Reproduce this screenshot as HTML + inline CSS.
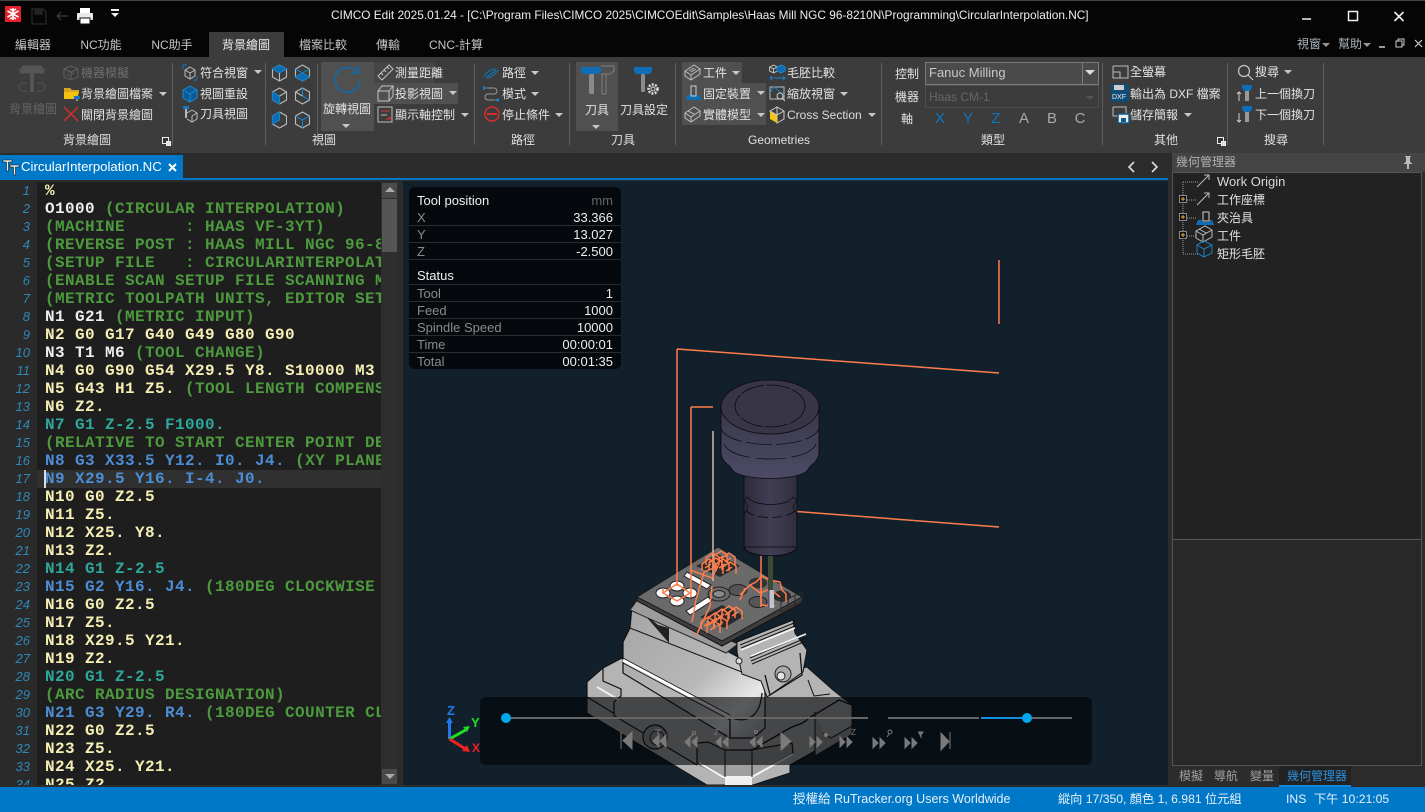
<!DOCTYPE html>
<html lang="zh-Hant"><head><meta charset="utf-8"><title>CIMCO Edit</title>
<style>
html,body{margin:0;padding:0;width:1425px;height:812px;overflow:hidden;background:#2c2c2c}
body{position:relative;font:12px/18px "Liberation Sans","Noto Sans CJK TC",sans-serif;color:#e2e2e2}
.b{position:absolute}
.t{position:absolute;white-space:nowrap;line-height:18px}
.c{transform:translateX(-50%)}
svg{position:absolute;overflow:visible}
.a{position:absolute;width:0;height:0;border-left:4px solid transparent;border-right:4px solid transparent;border-top:4px solid #c8c8c8}
.sep{position:absolute;width:1px;top:63px;height:82px;background:#5e5e5e}
.tab{position:absolute;top:36px;color:#c4c4c4;white-space:nowrap;line-height:18px;transform:translateX(-50%)}
.g{position:absolute;top:131px;color:#e0e0e0;white-space:nowrap;transform:translateX(-50%)}
#code{position:absolute;left:37px;top:182px;width:344px;height:603px;overflow:hidden;background:#1e1e1e}
#code div{position:absolute;left:8px;white-space:pre;font:bold 16px/18px "Liberation Mono",monospace;letter-spacing:.4px;color:#f6efb4}
#nums div{position:absolute;width:30px;text-align:right;font:italic 13px/18px "Liberation Sans",sans-serif;color:#2f88b8}
#code .v{color:#eee}#code .m{color:#4d9a3e}#code .e{color:#2da89c}#code .u{color:#4c8ed6}
.hr{position:absolute;left:0;right:0;height:1px;background:#2a2d30}
#info .t{line-height:17px;font-size:13px}
#info .k{color:#8a8a8a;left:8px}
#info .w{color:#eee;right:8px}
</style></head><body>

<!-- title bar -->
<div class="b" style="left:0;top:0;width:1425px;height:57px;background:#050505"></div>
<div class="b" style="left:0;top:0;width:1425px;height:1px;background:#444"></div>
<div class="b" style="left:5px;top:6px;width:16px;height:16px;background:#e2212c"></div>
<svg style="left:5px;top:6px" width="16" height="16" stroke="#fff" stroke-width="1.6"><path d="M8 2v12M2.500 5l11 6M13.500 5l-11 6M5 3l3 2 3-2M5 13l3-2 3 2"/></svg>
<svg style="left:30px;top:8px" width="18" height="17" fill="none" stroke="#232323" stroke-width="1.500"><path d="M2 1h11l3 3v12H2z"/><rect x="5" y="1" width="7" height="5" fill="#232323"/></svg>
<svg style="left:56px;top:10px" width="13" height="11" fill="none" stroke="#3e3e3e" stroke-width="1.200"><path d="M12 6H1M5 2L1 6l4 4"/></svg>
<svg style="left:76px;top:7px" width="18" height="18"><rect x="4" y="1" width="10" height="6" fill="#fff"/><rect x="1" y="6" width="16" height="7" rx="1" fill="#e8e8e8"/><rect x="4" y="11" width="10" height="6" fill="#fff" stroke="#111"/></svg>
<div class="b" style="left:111px;top:9px;width:8px;height:2px;background:#eee"></div><div class="a" style="left:111px;top:13px;border-top-color:#eee"></div>
<div class="t" style="left:331px;top:6px;color:#eee;font-size:11.85px">CIMCO Edit 2025.01.24 - [C:\Program Files\CIMCO 2025\CIMCOEdit\Samples\Haas Mill NGC 96-8210N\Programming\CircularInterpolation.NC]</div>
<svg style="left:1300px;top:8px" width="110" height="16" stroke="#eee" fill="none"><path d="M2 11h9" stroke-width="1.500"/><rect x="48.500" y="3.500" width="9" height="9" stroke-width="1.500"/><path d="M94.500 4l9 9M103.500 4l-9 9" stroke-width="1.600"/></svg>

<!-- tabs -->
<div class="b" style="left:209px;top:32px;width:75px;height:25px;background:#3c3c3c"></div>
<div class="tab" style="left:33px">編輯器</div>
<div class="tab" style="left:101px">NC功能</div>
<div class="tab" style="left:172px">NC助手</div>
<div class="tab" style="left:246px;color:#eee">背景繪圖</div>
<div class="tab" style="left:323px">檔案比較</div>
<div class="tab" style="left:388px">傳輸</div>
<div class="tab" style="left:456px">CNC-計算</div>
<div class="t" style="left:1297px;top:35px;color:#a8b4bc">視窗</div><div class="a" style="left:1322px;top:43px;border-top-color:#999"></div>
<div class="t" style="left:1338px;top:35px;color:#a8b4bc">幫助</div><div class="a" style="left:1363px;top:43px;border-top-color:#999"></div>
<svg style="left:1378px;top:38px" width="45" height="12" stroke="#ccc" fill="none"><path d="M1 9h6" stroke-width="1.500"/><path d="M18 3h6v6h-6zM20 3V1h6v6h-2"/><path d="M37 2l7 7M44 2l-7 7" stroke-width="1.200"/></svg>

<!-- ribbon -->
<div class="b" style="left:0;top:57px;width:1425px;height:96px;background:#3c3c3c"></div>
<div class="b" style="left:321px;top:62px;width:53px;height:69px;background:#505050"></div>
<div class="b" style="left:374px;top:62px;width:60px;height:21px;background:#454545"></div>
<div class="b" style="left:374px;top:83px;width:84px;height:21px;background:#505050"></div>
<div class="b" style="left:576px;top:62px;width:42px;height:69px;background:#505050"></div>
<div class="b" style="left:682px;top:62px;width:60px;height:21px;background:#505050"></div>
<div class="b" style="left:682px;top:83px;width:84px;height:42px;background:#505050"></div>
<div class="sep" style="left:172px"></div><div class="sep" style="left:265px"></div><div class="sep" style="left:317px"></div><div class="sep" style="left:474px"></div><div class="sep" style="left:569px"></div><div class="sep" style="left:675px"></div><div class="sep" style="left:881px"></div><div class="sep" style="left:1102px"></div><div class="sep" style="left:1227px"></div><div class="sep" style="left:1323px"></div>

<!-- group: background -->
<svg style="left:19px;top:65px" width="28" height="30" fill="none" stroke="#555"><rect x="3" y="1" width="20" height="3" rx="1" fill="#555"/><rect x="1" y="4" width="24" height="4" fill="#555"/><path d="M13 8v19" stroke-width="4"/><path d="M8 18H4a3 3 0 0 0 0 8h4M18 18h4a3 3 0 0 1 0 8h-4"/></svg>
<div class="t c" style="left:33px;top:100px;color:#666">背景繪圖</div>
<svg style="left:63px;top:65px" width="17" height="16" fill="none" stroke="#5e5e5e"><path d="M8 1l7 3v8l-7 3-7-3V4zM1 4l7 3 7-3M8 7v8M5 6l6 3M4 9l3 2"/></svg>
<div class="t" style="left:81px;top:64px;color:#6e6e6e">機器模擬</div>
<svg style="left:63px;top:86px" width="18" height="16"><path d="M1 2h6l2 2h7v2H1z" fill="#d9a520"/><path d="M1 6h15l-2 7H1z" fill="#f5c211"/><rect x="11" y="10" width="6" height="3" fill="#1876bd"/><rect x="13" y="13" width="2" height="2" fill="#888"/></svg>
<div class="t" style="left:81px;top:85px">背景繪圖檔案</div><div class="a" style="left:159px;top:92px"></div>
<svg style="left:63px;top:106px" width="16" height="16" stroke="#e02a2a" stroke-width="1.400"><path d="M1 1l14 14M15 1L1 15"/></svg>
<div class="t" style="left:81px;top:106px">關閉背景繪圖</div>
<div class="g" style="left:87px">背景繪圖</div>
<svg style="left:161px;top:136px" width="11" height="11" stroke="#eee" fill="#333"><rect x="1.500" y="1.500" width="6" height="6"/><rect x="5.500" y="5.500" width="4" height="4" fill="#ddd"/></svg>

<!-- group: view -->
<svg style="left:182px;top:64px" width="16" height="17" fill="none"><path d="M1 5V1h4M15 12v4h-4" stroke="#1276c0"/><path d="M8 3l5 3v6l-5 3-5-3V6zM3 6l5 3 5-3M8 9v6" stroke="#bbb"/></svg>
<div class="t" style="left:200px;top:64px">符合視窗</div><div class="a" style="left:254px;top:70px"></div>
<svg style="left:182px;top:85px" width="16" height="17" fill="#0a5a96" stroke="#1c88d4"><path d="M8 1l7 4v8l-7 4-7-4V5z"/><path d="M1 5l7 4 7-4M8 9v8" fill="none"/></svg>
<div class="t" style="left:200px;top:85px">視圖重設</div>
<svg style="left:182px;top:105px" width="16" height="17" fill="none" stroke="#bbb"><rect x="1" y="1" width="6" height="3" fill="#1876bd" stroke="none"/><path d="M4 4v9" stroke-width="2"/><path d="M10 5l5 3v6l-5 3-5-3M5 8l5-3M10 11l5-3M10 11v6"/></svg>
<div class="t" style="left:200px;top:105px">刀具視圖</div>
<div class="g" style="left:324px">視圖</div>

<svg style="left:272px;top:65px" width="40" height="64" fill="none" stroke-width="1.100">
<g transform="translate(0 0)"><path d="M7.500 0l7 4v8l-7 4-7-4V4z" stroke="#bbb"/><path d="M7.500 0l7 4-7 4-7-4z" fill="#0c6cb0" stroke="#1a80c4"/><path d="M7.500 8v8" stroke="#bbb"/></g>
<g transform="translate(23 0)"><path d="M7.500 0l7 4v8l-7 4-7-4V4z" stroke="#bbb"/><path d="M.5 12l7-4 7 4-7 4z" fill="#0c6cb0" stroke="#1a80c4"/><path d="M.5 4l7 4 7-4" stroke="#1a80c4"/></g>
<g transform="translate(0 23)"><path d="M7.500 0l7 4v8l-7 4-7-4V4z" stroke="#bbb"/><path d="M.5 4l7 4v8l-7-4z" fill="#0c6cb0" stroke="#1a80c4"/><path d="M7.500 8l7-4" stroke="#bbb"/></g>
<g transform="translate(23 23)"><path d="M7.500 0l7 4v8l-7 4-7-4V4z" stroke="#bbb"/><path d="M7.500 0v8l7 4" stroke="#1a80c4"/><path d="M7.500 8l-7-4" stroke="#bbb"/></g>
<g transform="translate(0 47)"><path d="M7.500 0l7 4v8l-7 4-7-4V4z" stroke="#bbb"/><path d="M.5 4l7-4v8l-7 4z" fill="#0c6cb0" stroke="#1a80c4"/></g>
<g transform="translate(23 47)"><path d="M7.500 0l7 4v8l-7 4-7-4V4z" stroke="#bbb"/><path d="M7.500 8v8M.5 4l7 4 7-4" stroke="#1a80c4"/></g>
</svg>

<svg style="left:333px;top:66px" width="30" height="28" fill="none" stroke="#0d6cae" stroke-width="1.500"><path d="M25 7A12.500 12.500 0 1 0 27 15"/><path d="M18 7h7.500V0"/></svg>
<div class="t c" style="left:347px;top:100px">旋轉視圖</div>
<div class="a" style="left:342px;top:124px"></div>
<svg style="left:377px;top:64px" width="17" height="17" fill="none" stroke="#c4c4c4"><path d="M1 12L12 1l4 4L5 16zM4 9l2 2M7 6l2 2M10 3l2 2"/></svg>
<div class="t" style="left:395px;top:64px">測量距離</div>
<svg style="left:377px;top:85px" width="17" height="17" fill="none" stroke="#c4c4c4"><path d="M1 6h11v10H1zM1 6l4-5h11l-4 5M12 16l4-5V1"/></svg>
<div class="t" style="left:395px;top:85px">投影視圖</div><div class="a" style="left:449px;top:91px"></div>
<svg style="left:377px;top:106px" width="17" height="17" fill="none"><path d="M1 1h14v15H1z" stroke="#bbb"/><path d="M4 5h9" stroke="#c33"/><path d="M4 9h6" stroke="#bbb"/><path d="M9 14l4-3M13 11v3" stroke="#d33"/></svg>
<div class="t" style="left:395px;top:106px">顯示軸控制</div><div class="a" style="left:461px;top:113px"></div>

<!-- group: path -->
<svg style="left:483px;top:66px" width="16" height="13" fill="none" stroke="#1276b8" stroke-width="1.100"><path d="M1 11c0-3 8-8 10-8s2 2 0 3-6 4-7 5 2 1 4 0 7-6 7-7"/></svg>
<div class="t" style="left:502px;top:64px">路徑</div><div class="a" style="left:531px;top:71px"></div>
<svg style="left:483px;top:85px" width="16" height="16" fill="none" stroke="#999"><path d="M3 3h8a3 3 0 0 1 0 6H5a3 3 0 0 0 0 6h10"/><path d="M0 1l5 2-5 2z" fill="#1a80c4" stroke="none"/><path d="M16 13l-5 2 5 2z" fill="#1a80c4" stroke="none"/></svg>
<div class="t" style="left:502px;top:85px">模式</div><div class="a" style="left:531px;top:92px"></div>
<svg style="left:484px;top:106px" width="16" height="16"><circle cx="8" cy="8" r="7" fill="none" stroke="#d92d2d" stroke-width="1.500"/><rect x="3" y="7" width="10" height="2" fill="#e02a2a"/></svg>
<div class="t" style="left:502px;top:106px">停止條件</div><div class="a" style="left:555px;top:113px"></div>
<div class="g" style="left:523px">路徑</div>

<!-- group: tool -->
<svg style="left:581px;top:65px" width="34" height="30"><path d="M0 2h20l0 4-2 3H2L0 6z" fill="#0e6fb8"/><rect x="8" y="9" width="5" height="20" rx="1" fill="#8a8a8a"/><path d="M20 1h13v5l-4 3h-9" fill="none" stroke="#808080"/><path d="M21 9v20h4V9" fill="none" stroke="#808080"/></svg>
<div class="t c" style="left:597px;top:101px">刀具</div>
<div class="a" style="left:592px;top:125px"></div>
<svg style="left:633px;top:65px" width="28" height="32"><path d="M1 2h18v4l-2 3H3L1 6z" fill="#0e6fb8"/><rect x="8" y="9" width="4" height="18" rx="1" fill="#8a8a8a"/><circle cx="20" cy="24" r="4.500" fill="none" stroke="#ddd" stroke-width="2.500" stroke-dasharray="2 1.300"/><circle cx="20" cy="24" r="2" fill="none" stroke="#ddd"/></svg>
<div class="t c" style="left:644px;top:101px">刀具設定</div>
<div class="g" style="left:623px">刀具</div>

<!-- geometries -->
<svg style="left:684px;top:64px" width="17" height="17" fill="none" stroke="#bbb"><path d="M1 7l9-6 6 4v5l-9 6-6-4zM1 7l6 4 9-6M7 11v5M5 7l5-3M7 8l5-3"/></svg>
<div class="t" style="left:703px;top:64px">工件</div><div class="a" style="left:732px;top:71px"></div>
<svg style="left:685px;top:85px" width="17" height="16"><path d="M2 10h13l1 5H1z" fill="#0e6fb8"/><rect x="6" y="1" width="5" height="10" fill="none" stroke="#ccc"/></svg>
<div class="t" style="left:703px;top:85px">固定裝置</div><div class="a" style="left:757px;top:91px"></div>
<svg style="left:684px;top:106px" width="17" height="17" fill="none" stroke="#bbb"><path d="M1 7l9-6 6 4v5l-9 6-6-4zM1 7l6 4 9-6M7 11v5M4 5l6 3"/></svg>
<div class="t" style="left:703px;top:106px">實體模型</div><div class="a" style="left:757px;top:113px"></div>
<svg style="left:769px;top:64px" width="17" height="17" fill="none"><path d="M4 1l4 2v4L4 9 0 7V3zM0 3l4 2 4-2M4 5v4" stroke="#bbb" transform="translate(.5 0)"/><path d="M12 1l4 2v4l-4 2-4-2V3z" fill="#0c6cb0" stroke="#1a88d0"/><path d="M1 14h15M1 14l2-2M1 14l2 2M16 14l-2-2M16 14l-2 2" stroke="#1a80c4"/></svg>
<div class="t" style="left:787px;top:64px">毛胚比較</div>
<svg style="left:769px;top:85px" width="17" height="17" fill="none"><path d="M1 2h14v12H1z" stroke="#bbb"/><path d="M1 8l4-6 10 8" stroke="#1a80c4"/><circle cx="11" cy="11" r="3" stroke="#ccc"/><path d="M13 13l3 3" stroke="#ccc"/></svg>
<div class="t" style="left:787px;top:85px">縮放視窗</div><div class="a" style="left:840px;top:92px"></div>
<svg style="left:769px;top:106px" width="17" height="17"><path d="M8 1l7 4v8l-7 4z" fill="none" stroke="#ccc"/><path d="M1 5l7 4v8l-7-4z" fill="#f4c31c"/><path d="M8 1L1 5l7 4 7-4" fill="none" stroke="#ccc"/></svg>
<div class="t" style="left:787px;top:106px;font-size:12px;color:#ddd">Cross Section</div><div class="a" style="left:868px;top:113px"></div>
<div class="g" style="left:779px;font-size:12px">Geometries</div>

<!-- type -->
<div class="t" style="left:895px;top:65px">控制</div>
<div class="t" style="left:895px;top:88px">機器</div>
<div class="t" style="left:901px;top:110px">軸</div>
<div class="b" style="left:925px;top:62px;width:172px;height:21px;background:#4a4a4a;border:1px solid #7a7a7a"></div>
<div class="t" style="left:929px;top:64px;font-size:13px;color:#c8c8c8">Fanuc Milling</div>
<div class="b" style="left:1082px;top:62px;width:1px;height:22px;background:#7a7a7a"></div><div class="b" style="left:1085px;top:70px;width:0;height:0;border-left:5px solid transparent;border-right:5px solid transparent;border-top:5px solid #ddd"></div>
<div class="b" style="left:925px;top:85px;width:172px;height:21px;border:1px solid #4e4e4e"></div>
<div class="t" style="left:929px;top:88px;color:#666">Haas CM-1</div><div class="a" style="left:1086px;top:96px;border-top-color:#555"></div>
<div class="t c" style="left:940px;top:110px;font-size:15px;color:#0f76be">X</div><div class="t c" style="left:968px;top:110px;font-size:15px;color:#0f76be">Y</div><div class="t c" style="left:996px;top:110px;font-size:15px;color:#0f76be">Z</div><div class="t c" style="left:1024px;top:110px;font-size:15px;color:#a8a8a8">A</div><div class="t c" style="left:1052px;top:110px;font-size:15px;color:#a8a8a8">B</div><div class="t c" style="left:1080px;top:110px;font-size:15px;color:#a8a8a8">C</div>
<div class="g" style="left:993px">類型</div>

<!-- other -->
<svg style="left:1112px;top:65px" width="17" height="14" fill="none" stroke="#bbb"><path d="M1 1h15v12H8M1 1v6M1 7h7v6H1z"/></svg>
<div class="t" style="left:1130px;top:63px">全螢幕</div>
<svg style="left:1111px;top:84px" width="18" height="18"><rect x="0" y="0" width="18" height="18" rx="2" fill="#0f4d78"/><rect x="3" y="1" width="10" height="5" fill="#ccc"/><text x="1" y="15" font-family="Liberation Sans" font-size="7" fill="#eee">DXF</text></svg>
<div class="t" style="left:1130px;top:85px">輸出為 DXF 檔案</div>
<svg style="left:1112px;top:106px" width="18" height="18" fill="none"><path d="M1 1h13v9H7" stroke="#bbb"/><path d="M1 1v9h5" stroke="#bbb"/><rect x="6" y="8" width="11" height="9" rx="1" fill="#eee" stroke="#0f5a8e" stroke-width="1.500"/><rect x="9" y="12" width="5" height="4" fill="#0f5a8e"/></svg>
<div class="t" style="left:1130px;top:106px">儲存簡報</div><div class="a" style="left:1184px;top:113px"></div>
<div class="g" style="left:1166px">其他</div>
<svg style="left:1216px;top:136px" width="11" height="11" stroke="#eee" fill="#333"><rect x="1.500" y="1.500" width="6" height="6"/><rect x="5.500" y="5.500" width="4" height="4" fill="#ddd"/></svg>

<!-- search -->
<svg style="left:1237px;top:64px" width="17" height="17" fill="none" stroke="#c8c8c8" stroke-width="1.200"><circle cx="7" cy="7" r="5.500"/><path d="M11 11l5 5"/></svg>
<div class="t" style="left:1255px;top:63px">搜尋</div><div class="a" style="left:1284px;top:70px"></div>
<svg style="left:1236px;top:85px" width="18" height="17"><path d="M6 0h10v3l-2 3H8L6 3z" fill="#0e6fb8"/><rect x="9" y="6" width="4" height="10" fill="#999"/><path d="M3 16V7M1 9l2-2 2 2" fill="none" stroke="#ccc"/></svg>
<div class="t" style="left:1255px;top:85px">上一個換刀</div>
<svg style="left:1236px;top:106px" width="18" height="17"><path d="M6 0h10v3l-2 3H8L6 3z" fill="#0e6fb8"/><rect x="9" y="6" width="4" height="10" fill="#999"/><path d="M3 7v9M1 14l2 2 2-2" fill="none" stroke="#ccc"/></svg>
<div class="t" style="left:1255px;top:106px">下一個換刀</div>
<div class="g" style="left:1276px">搜尋</div>

<!-- doc tab strip -->
<div class="b" style="left:0;top:155px;width:183px;height:23px;background:#0078c8"></div>
<div class="b" style="left:0;top:178px;width:1168px;height:2px;background:#0078c8"></div>
<svg style="left:3px;top:159px" width="18" height="17" fill="#eee" stroke="#111" stroke-width=".6"><path d="M0 1h9v2H5.500v9h-2V3H0z"/><path d="M7 6h9v2h-3.500v8h-2V8H7z"/></svg>
<div class="t" style="left:21px;top:158px;color:#fff;font-size:13.2px">CircularInterpolation.NC</div>
<svg style="left:168px;top:163px" width="9" height="9" stroke="#fff" stroke-width="2"><path d="M1 1l7 7M8 1L1 8"/></svg>
<svg style="left:1128px;top:160px" width="34" height="14" fill="none" stroke="#ddd" stroke-width="1.600"><path d="M6 2L1 7l5 5M24 2l5 5-5 5"/></svg>

<!-- editor -->
<div class="b" style="left:0;top:181px;width:37px;height:604px;background:#2a2a2a"></div>
<div id="code">
<div style="top:0">%</div>
<div style="top:18px"><span class="v">O1000</span> <span class="m">(CIRCULAR INTERPOLATION)</span></div>
<div style="top:36px" class="m">(MACHINE      : HAAS VF-3YT)</div>
<div style="top:54px" class="m">(REVERSE POST : HAAS MILL NGC 96-8210N)</div>
<div style="top:72px" class="m">(SETUP FILE   : CIRCULARINTERPOLATION)</div>
<div style="top:90px" class="m">(ENABLE SCAN SETUP FILE SCANNING MODE)</div>
<div style="top:108px" class="m">(METRIC TOOLPATH UNITS, EDITOR SETTINGS)</div>
<div style="top:126px"><span class="v">N1 G21</span> <span class="m">(METRIC INPUT)</span></div>
<div style="top:144px">N2 G0 G17 G40 G49 G80 G90</div>
<div style="top:162px"><span class="v">N3 T1 M6</span> <span class="m">(TOOL CHANGE)</span></div>
<div style="top:180px">N4 G0 G90 G54 X29.5 Y8. S10000 M3</div>
<div style="top:198px">N5 G43 H1 Z5. <span class="m">(TOOL LENGTH COMPENSATION)</span></div>
<div style="top:216px">N6 Z2.</div>
<div style="top:234px" class="e">N7 G1 Z-2.5 F1000.</div>
<div style="top:252px" class="m">(RELATIVE TO START CENTER POINT DEFINITION)</div>
<div style="top:270px"><span class="u">N8 G3 X33.5 Y12. I0. J4.</span> <span class="m">(XY PLANE ARC)</span></div>
<div class="b" style="left:0;top:288px;width:344px;height:18px;background:#303030"></div>
<div class="b" style="left:7px;top:288px;width:2px;height:18px;background:#ddd;z-index:2"></div>
<div style="top:288px" class="u">N9 X29.5 Y16. I-4. J0.</div>
<div style="top:306px">N10 G0 Z2.5</div>
<div style="top:324px">N11 Z5.</div>
<div style="top:342px">N12 X25. Y8.</div>
<div style="top:360px">N13 Z2.</div>
<div style="top:378px" class="e">N14 G1 Z-2.5</div>
<div style="top:396px"><span class="u">N15 G2 Y16. J4.</span> <span class="m">(180DEG CLOCKWISE ARC)</span></div>
<div style="top:414px">N16 G0 Z2.5</div>
<div style="top:432px">N17 Z5.</div>
<div style="top:450px">N18 X29.5 Y21.</div>
<div style="top:468px">N19 Z2.</div>
<div style="top:486px" class="e">N20 G1 Z-2.5</div>
<div style="top:504px" class="m">(ARC RADIUS DESIGNATION)</div>
<div style="top:522px"><span class="u">N21 G3 Y29. R4.</span> <span class="m">(180DEG COUNTER CLOCKWISE)</span></div>
<div style="top:540px">N22 G0 Z2.5</div>
<div style="top:558px">N23 Z5.</div>
<div style="top:576px">N24 X25. Y21.</div>
<div style="top:594px">N25 Z2.</div>
</div>
<div id="nums" class="b" style="left:0;top:182px;width:37px;height:603px;overflow:hidden">
<div style="top:0">1</div><div style="top:18px">2</div><div style="top:36px">3</div><div style="top:54px">4</div><div style="top:72px">5</div><div style="top:90px">6</div><div style="top:108px">7</div><div style="top:126px">8</div><div style="top:144px">9</div><div style="top:162px">10</div><div style="top:180px">11</div><div style="top:198px">12</div><div style="top:216px">13</div><div style="top:234px">14</div><div style="top:252px">15</div><div style="top:270px">16</div><div style="top:288px">17</div><div style="top:306px">18</div><div style="top:324px">19</div><div style="top:342px">20</div><div style="top:360px">21</div><div style="top:378px">22</div><div style="top:396px">23</div><div style="top:414px">24</div><div style="top:432px">25</div><div style="top:450px">26</div><div style="top:468px">27</div><div style="top:486px">28</div><div style="top:504px">29</div><div style="top:522px">30</div><div style="top:540px">31</div><div style="top:558px">32</div><div style="top:576px">33</div><div style="top:594px">34</div>
</div>
<div class="b" style="left:381px;top:181px;width:17px;height:604px;background:#2e2e2e"></div>
<div class="b" style="left:382px;top:183px;width:15px;height:15px;background:#4a4a4a"></div>
<div class="b" style="left:385px;top:187px;width:0;height:0;border-left:5px solid transparent;border-right:5px solid transparent;border-bottom:5px solid #aaa"></div>
<div class="b" style="left:382px;top:199px;width:15px;height:53px;background:#555"></div>
<div class="b" style="left:382px;top:769px;width:15px;height:15px;background:#4a4a4a"></div>
<div class="b" style="left:385px;top:774px;width:0;height:0;border-left:5px solid transparent;border-right:5px solid transparent;border-top:5px solid #aaa"></div>

<!-- viewport -->
<div class="b" style="left:403px;top:181px;width:765px;height:604px;background:#12202b;overflow:hidden">
<svg style="left:0;top:0" width="765" height="604" viewBox="403 181 765 604">
<defs>
<linearGradient id="bd" x1="0" y1="0" x2="1" y2="1"><stop offset="0" stop-color="#a4a4a4"/><stop offset=".55" stop-color="#b8b8b8"/><stop offset=".8" stop-color="#e8e8e8"/><stop offset="1" stop-color="#a8a8a8"/></linearGradient>
<linearGradient id="ho" x1="0" y1="0" x2="0" y2="1"><stop offset="0" stop-color="#3a384a"/><stop offset="1" stop-color="#4c4a66"/></linearGradient>
<linearGradient id="ne" x1="0" y1="0" x2="1" y2="0"><stop offset="0" stop-color="#2e2c38"/><stop offset=".5" stop-color="#403e54"/><stop offset="1" stop-color="#302e3c"/></linearGradient>
<path id="n" d="M0 12V5l7-5 6 4v8M3 9l6-4" fill="none"/>
</defs>
<!-- base -->
<path d="M587 682L603 668L622 658L682 698L807 667L833 690L852 705V730L790 765V773L753 785H707L587 713Z" fill="#b4b4b4" stroke="#111"/>
<path d="M603 668v13l18 8v7l-7 6v12M587 697l28 17M587 682v15" fill="none" stroke="#111" stroke-width="1.200"/>
<path d="M597 687l22 13" stroke="#eee" stroke-width="2" fill="none"/>
<path d="M613 715l84 50" stroke="#111" fill="none" stroke-width="1.200"/>
<path d="M697 743v20l26 14h29l41-24-1-10-42 7h-25l-17-8z" fill="#a0a0a0" stroke="#111" stroke-width="1.200"/>
<path d="M699 763l24 14h29l41-23" stroke="#f4f4f4" stroke-width="2" fill="none"/>
<path d="M725 777h27v8h-27z" fill="#f0f0f0"/>
<path d="M725 750v27M752 750v27" stroke="#111"/>
<path d="M752 750l38-22c8-4 12-3 19-10l30-18 13 5" fill="none" stroke="#111" stroke-width="1.400"/>
<circle cx="655" cy="737" r="12" fill="#a0a0a0" stroke="#111" stroke-width="1.200"/><circle cx="657" cy="738" r="7" fill="none" stroke="#222"/>
<path d="M815 712v44l37-22v-8l-21 12-8-5" fill="#a0a0a0" stroke="#111"/>
<path d="M808 680l6 16 16-2" fill="none" stroke="#111"/>
<!-- upper body -->
<path d="M632 605l-2 23-7 14v31l107 65h23l12-10 0-48-3-10-92-50z" fill="url(#bd)" stroke="#111" stroke-width="1.200"/>
<path d="M630 628l127 50" fill="none" stroke="#111"/>
<path d="M623 660l107 57" fill="none" stroke="#fff" stroke-width="3"/>
<path d="M623 658l107 57M623 663l107 57" fill="none" stroke="#111" stroke-width=".8"/>
<path d="M730 717v21M730 717c12 6 30 4 32-24" fill="none" stroke="#222" stroke-width="1.400"/>
<path d="M642 612l16 13 11 3v15z" fill="#222"/>
<path d="M630 610l96 43 12-9-100-45z" fill="#9c9c9c" stroke="#222"/>
<!-- clamp right -->
<path d="M737 642l56-22 2 13 12 17-4 22-36 25-6-16-19-7-5-22z" fill="#b4b4b4" stroke="#111"/>
<path d="M740 645l54-22M741 648l54-22M750 658l56-24M751 661l55-23M752 664l54-23" stroke="#111" fill="none"/>
<path d="M741 650l54-22M751 656l55-22" stroke="#f6f6f6" stroke-width="1.600" fill="none"/>
<path d="M765 675l5 20 32-20-2-22" fill="none" stroke="#111" stroke-width="1.300"/>
<circle cx="783" cy="674" r="8" fill="#aaa" stroke="#222"/><circle cx="781" cy="676" r="4" fill="#e4e4e4" stroke="#222"/>
<circle cx="739" cy="661" r="3" fill="#ddd" stroke="#222"/>
<!-- plate -->
<path d="M637 597v4l85 45 80-43v-6z" fill="#3e3e3e" stroke="#111"/>
<path d="M637 597l81-50 84 50-80 44z" fill="#6a6a6a" stroke="#1a1a1a"/>
<!-- plate holes -->
<g fill="#fff" stroke="#222"><ellipse cx="677" cy="586" rx="7" ry="5"/><ellipse cx="663" cy="593" rx="7" ry="5"/><ellipse cx="690" cy="593" rx="7" ry="5"/><ellipse cx="677" cy="601" rx="7" ry="5"/><path d="M684 576l3-4 24 13-4 4zM686 611l4 4 22-14-4-4z"/></g>
<ellipse cx="719" cy="594" rx="11" ry="7" fill="#6a6a6a" stroke="#222"/><ellipse cx="719" cy="594" rx="6" ry="3.500" fill="#8a8a8a" stroke="#222"/>
<g fill="#2a2a2a"><path d="M696 566l22-12 22 12-20 11zM700 617l22-12 22 11-20 12z"/></g>
<ellipse cx="738" cy="590" rx="9" ry="5.500" fill="#555" stroke="#222"/><ellipse cx="758" cy="583" rx="9" ry="5.500" fill="#333"/><ellipse cx="782" cy="596" rx="9" ry="5.500" fill="#2a2a2a"/><ellipse cx="758" cy="602" rx="9" ry="5.500" fill="#555" stroke="#222"/>
<g fill="none" stroke="#2a2a2a"><path d="M781 612v-10l21-10v9zM788 599v10M795 596v10"/></g>
<!-- toolpath -->
<g fill="none" stroke="#ff7d4d" stroke-width="1.500">
<path d="M999 260v64M677 349l322 24M677 349v237M691 407h22M691 407v190"/>
<path d="M790 511l209 16"/>
<path d="M713 431v150" stroke="#d9b8a6"/>
<path d="M761 555v52"/>
<path d="M663 593l14-9 13 9-13 8zM663 593v-4M690 570l22 8 6-12-14 6 -8 28-4 22M712 586l-2 20-14 30"/>
<use href="#n" x="702" y="559"/><use href="#n" x="709" y="558"/><use href="#n" x="716" y="559"/><use href="#n" x="723" y="562"/><use href="#n" x="706" y="553"/><use href="#n" x="714" y="551"/><use href="#n" x="722" y="553"/>
<use href="#n" x="701" y="617"/><use href="#n" x="708" y="613"/><use href="#n" x="715" y="609"/><use href="#n" x="722" y="606"/><use href="#n" x="729" y="607"/><use href="#n" x="707" y="621"/><use href="#n" x="714" y="617"/>
<path d="M740 595l10-10 6-3 6-6 8 4 10 2 2 8 4 4v8M750 585l10 8 10-4 10 8M761 580v25l14 1M745 588l-5 12"/>
</g>
<!-- holder -->
<path d="M744 465v82c0 11 53 11 53 0v-82z" fill="url(#ne)"/>
<path d="M748 497c5 10 40 10 45 0l4 3-4 7 4 8v32H744v-32l4-8-4-7z" fill="url(#ne)" stroke="#0a0a10" stroke-width=".7"/>
<path d="M746 510c6 10 44 10 49 0" fill="none" stroke="#0a0a10" stroke-dasharray="10 4" stroke-width=".8"/>
<path d="M744 470v77M797 470v77" stroke="#0a0a10" stroke-width=".8" fill="none"/>
<path d="M744 547c3 12 50 12 53 0" fill="none" stroke="#0a0a10"/>
<path d="M721 407v44c0 12 8 12 12 20 12 10 62 10 74 0 4-8 12-8 12-20v-44z" fill="url(#ho)" stroke="#0a0a10" stroke-width=".8"/>
<ellipse cx="770" cy="407" rx="49" ry="27" fill="#383645" stroke="#0a0a10" stroke-width=".8"/>
<ellipse cx="770" cy="406" rx="35" ry="21" fill="none" stroke="#0a0a10" stroke-dasharray="24 2" stroke-width=".8"/>
<path d="M721 428c6 22 92 22 98 0" fill="none" stroke="#0a0a10" stroke-dasharray="26 4" stroke-width=".7"/>
<path d="M724 444c8 20 84 20 92 0" fill="none" stroke="#0a0a10" stroke-dasharray="30 6" stroke-width=".7"/>
<rect x="768" y="556" width="5" height="34" fill="#3c4a34"/>
<rect x="769" y="590" width="5" height="18" fill="#c4c4cc"/>
<rect x="768" y="590" width="1.500" height="18" fill="#556"/>
</svg>

<!-- info panel -->
<div id="info" class="b" style="left:6px;top:6px;width:212px;height:182px;background:#05090d;border-radius:6px">
<div class="t" style="top:5px;left:8px;color:#f0f0f0;line-height:18px;font-size:13px">Tool position</div><div class="t" style="top:5px;right:8px;color:#666;line-height:18px;font-size:13px">mm</div>
<div class="t k" style="top:22px">X</div><div class="t w" style="top:22px">33.366</div><div class="hr" style="top:38px"></div>
<div class="t k" style="top:39px">Y</div><div class="t w" style="top:39px">13.027</div><div class="hr" style="top:55px"></div>
<div class="t k" style="top:56px">Z</div><div class="t w" style="top:56px">-2.500</div><div class="hr" style="top:72px"></div>
<div class="t" style="top:80px;left:8px;color:#f0f0f0;line-height:18px;font-size:13px">Status</div><div class="hr" style="top:97px"></div>
<div class="t k" style="top:98px">Tool</div><div class="t w" style="top:98px">1</div><div class="hr" style="top:114px"></div>
<div class="t k" style="top:115px">Feed</div><div class="t w" style="top:115px">1000</div><div class="hr" style="top:131px"></div>
<div class="t k" style="top:132px">Spindle Speed</div><div class="t w" style="top:132px">10000</div><div class="hr" style="top:148px"></div>
<div class="t k" style="top:149px">Time</div><div class="t w" style="top:149px">00:00:01</div><div class="hr" style="top:165px"></div>
<div class="t k" style="top:166px">Total</div><div class="t w" style="top:166px">00:01:35</div>
</div>

<!-- axis triad -->
<svg style="left:35px;top:518px" width="50" height="60">
<path d="M11.500 40V22" stroke="#2277ee" stroke-width="3"/><path d="M8 24l3.500-6 3.500 6z" fill="#2277ee"/>
<path d="M11.500 40l16-9" stroke="#22dd22" stroke-width="3"/><path d="M25 28l7-1-3 6z" fill="#22dd22"/>
<path d="M11.500 40l16 10" stroke="#ee2222" stroke-width="3"/><path d="M24 52l8 1-3-7z" fill="#ee2222"/>
<text x="9" y="16" font-family="Liberation Sans" font-size="13" font-weight="bold" fill="#2277ee">Z</text>
<text x="33" y="28" font-family="Liberation Sans" font-size="13" font-weight="bold" fill="#22dd22">Y</text>
<text x="34" y="53" font-family="Liberation Sans" font-size="12" font-weight="bold" fill="#ee2222">X</text>
</svg>

<!-- playback panel -->
<div class="b" style="left:77px;top:516px;width:612px;height:68px;background:rgba(2,4,6,.62);border-radius:6px"></div>
<div class="b" style="left:99px;top:536px;width:366px;height:2px;background:#666"></div>
<div class="b" style="left:485px;top:536px;width:91px;height:2px;background:#666"></div>
<div class="b" style="left:578px;top:536px;width:46px;height:2px;background:#1190e0"></div>
<div class="b" style="left:624px;top:536px;width:45px;height:2px;background:#666"></div>
<div class="b" style="left:98px;top:532px;width:10px;height:10px;border-radius:5px;background:#00a8f0"></div>
<div class="b" style="left:619px;top:532px;width:10px;height:10px;border-radius:5px;background:#00a8f0"></div>
<svg style="left:215px;top:545px" width="340" height="30" fill="#7a7a7a" stroke="#7a7a7a">
<path d="M3 6v17M14 6v17L5 14.500z"/>
<path d="M41 9l-6 6 6 6zM48 9l-6 6 6 6z"/><path d="M37 4h6M40 4v5" fill="none" stroke="#777"/>
<path d="M72 11l-5 5 5 5zM79 11l-5 5 5 5z"/><circle cx="76" cy="7" r="1.500" fill="none"/><path d="M75 8l-2 3"/>
<path d="M103 11l-5 5 5 5zM110 11l-5 5 5 5z"/><text x="96" y="9" font-size="8" font-family="Liberation Sans" stroke="none">Z</text>
<path d="M137 11l-5 5 5 5zM144 11l-5 5 5 5z"/><circle cx="138" cy="6" r="1.500" fill="none"/>
<path d="M163 7v17l10-8.500z"/>
<path d="M192 11l5 5-5 5zM199 11l5 5-5 5z"/><circle cx="208" cy="9" r="1.500"/>
<path d="M222 11l5 5-5 5zM229 11l5 5-5 5z"/><text x="233" y="9" font-size="8" font-family="Liberation Sans" stroke="none">Z</text>
<path d="M255 12l5 5-5 5zM262 12l5 5-5 5z"/><circle cx="272" cy="6" r="2" fill="none"/><path d="M271 8l-2 3"/>
<path d="M287 12l5 5-5 5zM294 12l5 5-5 5z"/><path d="M300 6h5l-2 3v3"/>
<path d="M323 7v17l8-8.500zM332 6v17"/>
</svg>
</div>

<!-- right panel -->
<div class="b" style="left:1172px;top:153px;width:253px;height:19px;background:#444"></div>
<div class="t" style="left:1176px;top:153px;color:#b0b0b0;line-height:19px">幾何管理器</div>
<svg style="left:1403px;top:156px" width="10" height="13" fill="#bbb"><path d="M2 0h6v1H7v5l2 1v1H6v5H4V8H1V7l2-1V1H2z"/></svg>
<div class="b" style="left:1172px;top:172px;width:250px;height:368px;background:#222;border:1px solid #555;box-sizing:border-box"></div>
<div class="b" style="left:1172px;top:539px;width:250px;height:227px;background:#282828;border:1px solid #555;box-sizing:border-box"></div>
<svg style="left:1172px;top:172px" width="60" height="90" fill="none">
<path d="M11 10h15M11 10v72h15M11 28h14M11 46h14M11 64h14" stroke="#999" stroke-dasharray="1 1"/>
<rect x="7.500" y="23.500" width="7" height="7" fill="#111" stroke="#888"/><path d="M9 27h4M11 25v4" stroke="#e8b440"/>
<rect x="7.500" y="41.500" width="7" height="7" fill="#111" stroke="#888"/><path d="M9 45h4M11 43v4" stroke="#e8b440"/>
<rect x="7.500" y="59.500" width="7" height="7" fill="#111" stroke="#888"/><path d="M9 63h4M11 61v4" stroke="#e8b440"/>
<path d="M25 15L37 3M32 3h5v5M25 33l12-12M32 21h5v5" stroke="#bbb"/>
<path d="M24 53l2-5h4v2h8v-2h2l2 5z" fill="#0e6fb8"/><rect x="31" y="40" width="6" height="9" stroke="#ccc"/>
<path d="M24 59l9-5 7 4v7l-9 5-7-4zM24 59l7 4 9-5M31 63v7M27 57l7 4" stroke="#bbb"/>
<path d="M25 77v-8l7-4 8 4v8l-8 4zM25 69l7 4 8-4M32 73v8" stroke="#1a80c4" transform="translate(0 4)"/>
</svg>
<div class="t" style="left:1217px;top:173px;font-size:13px;color:#d8d8d8">Work Origin</div>
<div class="t" style="left:1217px;top:191px">工作座標</div>
<div class="t" style="left:1217px;top:209px">夾治具</div>
<div class="t" style="left:1217px;top:227px">工件</div>
<div class="t" style="left:1217px;top:245px">矩形毛胚</div>
<div class="b" style="left:1279px;top:785px;width:72px;height:2px;background:#1488d8"></div>
<div class="t" style="left:1179px;top:767px;color:#a0a0a0">模擬</div>
<div class="t" style="left:1214px;top:767px;color:#a0a0a0">導航</div>
<div class="t" style="left:1250px;top:767px;color:#a0a0a0">變量</div>
<div class="b" style="left:1279px;top:766px;width:72px;height:19px;background:#222"></div>
<div class="t" style="left:1287px;top:767px;color:#2b90dc">幾何管理器</div>

<!-- status -->
<div class="b" style="left:0;top:787px;width:1425px;height:25px;background:#0078c8"></div>
<div class="t" style="left:793px;top:790px;color:#e8f0f8;font-size:12.5px">授權給 RuTracker.org Users Worldwide</div>
<div class="t" style="left:1058px;top:790px;color:#e8f0f8;font-size:12.2px">縱向 17/350, 顏色 1, 6.981 位元組</div>
<div class="t" style="left:1286px;top:790px;color:#e8f0f8;font-size:12.2px">INS</div>
<div class="t" style="left:1314px;top:790px;color:#e8f0f8;font-size:12.2px">下午 10:21:05</div>
</body></html>
